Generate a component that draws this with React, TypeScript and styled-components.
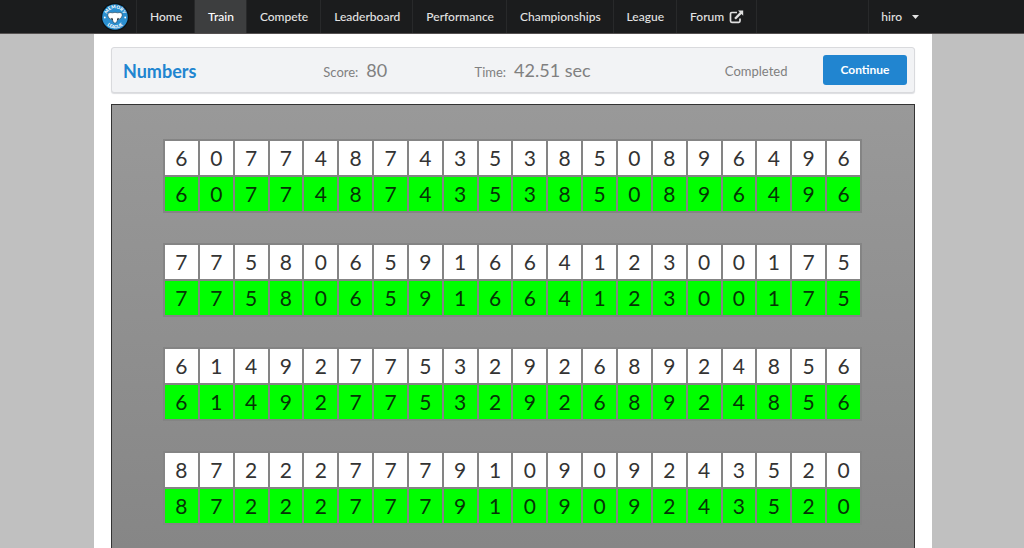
import React from "react";
import styled, { createGlobalStyle } from "styled-components";

const GlobalStyle = createGlobalStyle`
  *, *::before, *::after { box-sizing: border-box; }
  body {
    margin: 0;
    background: #c0c0c0;
    font-family: Lato, "Liberation Sans", sans-serif;
    font-size: 13px;
    line-height: 18px;
    color: #333;
  }
`;

const Page = styled.div`
  display: flex;
  flex-direction: column;
  min-height: 100vh;
`;

const TopBar = styled.header`
  background: #1b1c1d;
  border-bottom: 1px solid #555151;
`;

const Nav = styled.nav`
  display: flex;
  height: 33px;
  margin: 0 92px 0 94px;
`;

const LogoLink = styled.a`
  display: flex;
  align-items: center;
  padding: 0 7px;
  border-right: 1px solid #28292a;
`;

const NavLink = styled.a<{ $active?: boolean }>`
  display: flex;
  align-items: center;
  gap: 5px;
  padding: 0 12px 0 13px;
  border-right: 1px solid #28292a;
  background: ${(p) => (p.$active ? "#3d3e3f" : "transparent")};
  color: ${(p) => (p.$active ? "#fff" : "#e3e3e3")};
  font-size: 12px;
  font-weight: 500;
  text-decoration: none;
  white-space: nowrap;
`;

const UserMenu = styled.button`
  display: flex;
  align-items: center;
  gap: 10px;
  margin-left: auto;
  padding: 0 13px 0 12px;
  border: 0;
  border-left: 1px solid #28292a;
  background: transparent;
  color: #e3e3e3;
  font: inherit;
  font-size: 12px;
  font-weight: 500;
`;

const Content = styled.main`
  display: flex;
  flex: 1;
  flex-direction: column;
  gap: 11px;
  margin: 0 92px 0 94px;
  padding: 13px 17px 0;
  background: #fff;
`;

const Summary = styled.section`
  display: flex;
  align-items: center;
  height: 46px;
  padding: 0 7px 0 11px;
  border: 1px solid #d9dadd;
  border-radius: 3px;
  background: #f2f3f5;
  box-shadow: 0 1px 1px #dcdde0;
  color: #808080;
`;

const Title = styled.h1`
  flex: 200;
  margin: 0;
  padding-top: 2px;
  color: #2185d0;
  font-size: 18px;
  font-weight: 700;
`;

const Stat = styled.div<{ $grow: number }>`
  display: flex;
  flex: ${(p) => p.$grow};
  align-items: baseline;
  gap: 8px;
  padding-top: 2px;
  white-space: nowrap;
`;

const StatValue = styled.span`
  font-size: 18px;
`;

const Status = styled.div`
  flex: 98;
  padding-top: 2px;
`;

const ContinueButton = styled.button`
  width: 84px;
  height: 30px;
  border: 0;
  border-radius: 3px;
  background: #2185d0;
  color: #fff;
  font: inherit;
  font-size: 12px;
  font-weight: 700;
`;

const Stage = styled.section`
  display: flex;
  flex: 1;
  flex-direction: column;
  gap: 30px;
  padding: 34px 52px 0 51px;
  border: 1px solid #333;
  border-bottom: 0;
  background: linear-gradient(#999, #868686);
`;

const DigitTable = styled.table`
  width: 100%;
  table-layout: fixed;
  border-collapse: collapse;
`;

const Digit = styled.td<{ $correct?: boolean }>`
  height: 36px;
  padding: 0;
  border: 2px solid #848484;
  background: ${(p) => (p.$correct ? "#0f0" : "#fff")};
  color: ${(p) => (p.$correct ? "#063306" : "#333")};
  font-size: 21px;
  line-height: 24px;
  text-align: center;
`;

const LogoIcon = () => (
  <svg width="28" height="28" viewBox="0 0 28 28" role="img" aria-label="Memory League">
    <defs>
      <path id="logo-top" d="M5.4 14a8.6 8.6 0 0 1 17.2 0" />
      <path id="logo-bottom" d="M2.6 14a11.4 11.4 0 0 0 22.8 0" />
    </defs>
    <circle cx="14" cy="14" r="14" fill="#0b1013" />
    <circle cx="14" cy="14" r="12.8" fill="#2b8fd0" />
    <g fill="#fff" fontSize="4.6" fontWeight="900" textAnchor="middle">
      <text><textPath href="#logo-top" startOffset="50%">MEMORY</textPath></text>
      <text><textPath href="#logo-bottom" startOffset="50%">LEAGUE</textPath></text>
    </g>
    <path d="M7 10.300Q9 9 11.500 9.800 14 8.900 16.500 9.800 19 9 21 10.300L21.200 12.500Q20.600 15.800 17.800 16.400L16.600 16.700Q16 20 14 20.300 12 20 11.400 16.700L10.200 16.400Q7.400 15.800 6.800 12.500Z" fill="#fff" stroke="#18384b" strokeWidth=".6" />
    <path d="M10.600 15l1 1.700M17.400 15l-1 1.700" fill="none" stroke="#101a20" strokeWidth="1.100" />
    <circle cx="3.800" cy="14.500" r=".9" fill="#fff" />
    <circle cx="24.200" cy="14.500" r=".9" fill="#fff" />
  </svg>
);

const ExternalIcon = () => (
  <svg width="15" height="14" viewBox="0 0 15 14" aria-hidden="true">
    <path d="M8 2.500H2.800Q1.500 2.500 1.500 3.800V11Q1.500 12.300 2.800 12.300H9.800Q11 12.300 11 11V8.500" fill="none" stroke="#e0e0e0" strokeWidth="1.700" />
    <path d="M9 .5h5.200v5.200l-1.700-1.700-5.600 5.600-1.700-1.700 5.600-5.600Z" fill="#e0e0e0" />
  </svg>
);

const CaretIcon = () => (
  <svg width="7" height="4" viewBox="0 0 7 4" aria-hidden="true">
    <path d="M0 0h7L3.500 4Z" fill="#e3e3e3" />
  </svg>
);

const links = ["Home", "Train", "Compete", "Leaderboard", "Performance", "Championships", "League"];

const rows = [
  "60774874353850896496",
  "77580659166412300175",
  "61492775329268924856",
  "87222777910909243520",
];

export default function App() {
  return (
    <Page>
      <GlobalStyle />
      <TopBar>
        <Nav>
          <LogoLink href="#"><LogoIcon /></LogoLink>
          {links.map((label) => (
            <NavLink key={label} href="#" $active={label === "Train"}>{label}</NavLink>
          ))}
          <NavLink href="#">Forum <ExternalIcon /></NavLink>
          <UserMenu type="button">hiro <CaretIcon /></UserMenu>
        </Nav>
      </TopBar>
      <Content>
        <Summary>
          <Title>Numbers</Title>
          <Stat $grow={151}>Score: <StatValue>80</StatValue></Stat>
          <Stat $grow={250}>Time: <StatValue>42.51 sec</StatValue></Stat>
          <Status>Completed</Status>
          <ContinueButton type="button">Continue</ContinueButton>
        </Summary>
        <Stage>
          {rows.map((row) => (
            <DigitTable key={row}>
              <tbody>
                <tr>{[...row].map((d, i) => <Digit key={i}>{d}</Digit>)}</tr>
                <tr>{[...row].map((d, i) => <Digit key={i} $correct>{d}</Digit>)}</tr>
              </tbody>
            </DigitTable>
          ))}
        </Stage>
      </Content>
    </Page>
  );
}
